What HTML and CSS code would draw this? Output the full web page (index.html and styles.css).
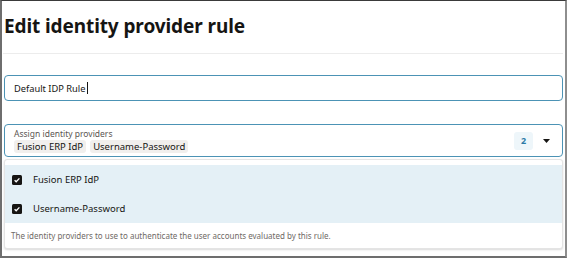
FILE: index.html
```html
<!DOCTYPE html>
<html>
<head>
<meta charset="utf-8">
<link rel="stylesheet" href="styles.css">
</head>
<body>
<div class="frame">
  <h1 class="title">Edit identity provider rule</h1>
  <div class="sep"></div>
  <div class="field name-field">
    <span class="value">Default IDP Rule</span><span class="cursor"></span>
  </div>
  <div class="field select-field">
    <div class="select-main">
      <div class="label">Assign identity providers</div>
      <div class="chips">
        <span class="chip">Fusion ERP IdP</span>
        <span class="chip">Username-Password</span>
      </div>
    </div>
    <span class="count">2</span>
    <svg class="caret" width="7" height="4" viewBox="0 0 7 4"><path d="M0 0 H7 L3.5 4 Z" fill="#161513"/></svg>
  </div>
  <div class="dropdown">
    <div class="options">
      <div class="option">
        <span class="check"><svg width="10" height="10" viewBox="0 0 10 10"><path d="M2.6 5.2 L4.2 6.8 L7.4 3.4" fill="none" stroke="#fff" stroke-width="1.3"/></svg></span>
        <span>Fusion ERP IdP</span>
      </div>
      <div class="option">
        <span class="check"><svg width="10" height="10" viewBox="0 0 10 10"><path d="M2.6 5.2 L4.2 6.8 L7.4 3.4" fill="none" stroke="#fff" stroke-width="1.3"/></svg></span>
        <span>Username-Password</span>
      </div>
    </div>
    <div class="help">The identity providers to use to authenticate the user accounts evaluated by this rule.</div>
  </div>
</div>
</body>
</html>
```

FILE: styles.css
```css
html, body {
  margin: 0;
  padding: 0;
  background: #ffffff;
}
body {
  width: 567px;
  height: 258px;
  overflow: hidden;
  font-family: "Noto Sans", "Open Sans", sans-serif;
  color: #161513;
}
.frame {
  box-sizing: border-box;
  width: 567px;
  height: 258px;
  border-top: 1px solid #3a3a3a;
  border-left: 2px solid #6e6e6e;
  border-right: 2px solid #8e8e8e;
  border-bottom: 2px solid #6e6e6e;
  padding: 0 2px 0 0;
}
.title {
  margin: 0;
  padding: 12px 0 0 2px;
  height: 39px;
  box-sizing: border-box;
  font-size: 19px;
  font-weight: 700;
  line-height: 26px;
  letter-spacing: -0.1px;
}
.sep {
  margin-top: 13px;
  margin-left: 1px;
  height: 1px;
  background: #ececec;
}
.field {
  box-sizing: border-box;
  border: 1.5px solid #4c93b5;
  border-radius: 4px;
  margin-left: 2px;
  margin-right: 0;
}
.name-field {
  margin-top: 21px;
  height: 26px;
  display: flex;
  align-items: center;
  padding-left: 9px;
  font-size: 9.3px;
}
.cursor {
  display: inline-block;
  width: 1px;
  height: 12px;
  background: #161513;
  margin-left: 1px;
}
.select-field {
  margin-top: 23px;
  height: 33px;
  display: flex;
  align-items: center;
  padding: 0 12px 0 9px;
}
.select-main {
  flex: 1;
  display: flex;
  flex-direction: column;
}
.label {
  font-size: 8.5px;
  color: #5b5652;
  line-height: 10px;
  margin-top: 1px;
}
.chips {
  display: flex;
  gap: 4px;
  margin-top: 1px;
  margin-left: 0;
}
.chip {
  background: #f1efed;
  border-radius: 3px;
  font-size: 9.5px;
  line-height: 13px;
  padding: 0 3px;
}
.count {
  width: 19px;
  height: 18px;
  border-radius: 3px;
  background: #eef6fa;
  color: #2b7aa6;
  font-size: 9px;
  font-weight: 700;
  display: flex;
  align-items: center;
  justify-content: center;
  margin-right: 10px;
}
.caret {
  display: block;
}
.dropdown {
  margin: 2px 0 0 2px;
  height: 90px;
  box-sizing: border-box;
  border: 1px solid #e4e4e4;
  border-radius: 3px;
  box-shadow: 0 1px 2px rgba(0,0,0,0.15);
  background: #fff;
  padding-top: 5px;
  display: flex;
  flex-direction: column;
}
.options {
  background: #e4f0f6;
  height: 58px;
  display: flex;
  flex-direction: column;
  justify-content: center;
  gap: 9px;
}
.option {
  display: flex;
  align-items: center;
  font-size: 9.5px;
  height: 20px;
  padding-left: 7px;
}
.check {
  width: 10px;
  height: 10px;
  background: #161513;
  border-radius: 1.5px;
  margin-right: 11px;
  display: flex;
}
.help {
  font-size: 8px;
  color: #6f6a66;
  padding: 7px 0 0 6px;
}
```
